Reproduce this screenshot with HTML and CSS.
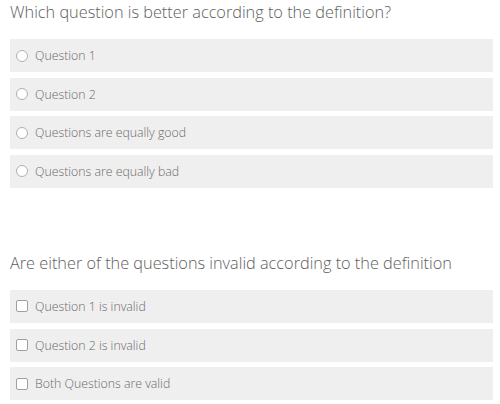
FILE: index.html
```html
<!DOCTYPE html>
<html>
<head>
<meta charset="utf-8">
<link rel="stylesheet" href="styles.css">
</head>
<body>
<div class="page">
  <section class="question">
    <h2 class="title">Which question is better according to the definition?</h2>
    <div class="options">
      <label class="option"><span class="radio"></span><span class="label">Question 1</span></label>
      <label class="option"><span class="radio"></span><span class="label">Question 2</span></label>
      <label class="option"><span class="radio"></span><span class="label">Questions are equally good</span></label>
      <label class="option"><span class="radio"></span><span class="label">Questions are equally bad</span></label>
    </div>
  </section>
  <section class="question second">
    <h2 class="title">Are either of the questions invalid according to the definition</h2>
    <div class="options">
      <label class="option"><span class="check"></span><span class="label">Question 1 is invalid</span></label>
      <label class="option"><span class="check"></span><span class="label">Question 2 is invalid</span></label>
      <label class="option"><span class="check"></span><span class="label">Both Questions are valid</span></label>
    </div>
  </section>
</div>
</body>
</html>
```

FILE: styles.css
```css
html, body {
  margin: 0;
  padding: 0;
  background: #ffffff;
}
.page {
  width: 483px;
  padding: 0 7px 0 10px;
  font-family: "Open Sans", "DejaVu Sans", sans-serif;
}
.title {
  margin: 0;
  font-weight: 300;
  font-size: 16.3px;
  line-height: 24px;
  color: #5e5e5e;
  height: 24px;
}
.options {
  display: flex;
  flex-direction: column;
  gap: 5.67px;
  margin-top: 15px;
}
.second {
  margin-top: 63px;
}
.option {
  display: flex;
  align-items: center;
  height: 33px;
  background: #efefef;
  padding-left: 6px;
}
.radio {
  width: 10px;
  height: 10px;
  border: 1px solid #b0b0b0;
  border-radius: 50%;
  background: #fff;
  flex: none;
}
.check {
  width: 10px;
  height: 10px;
  border: 1px solid #a0a0a0;
  border-radius: 2px;
  background: #fff;
  flex: none;
}
.label {
  margin-left: 7px;
  font-size: 12.3px;
  font-weight: 300;
  color: #6a6a6a;
}
```
